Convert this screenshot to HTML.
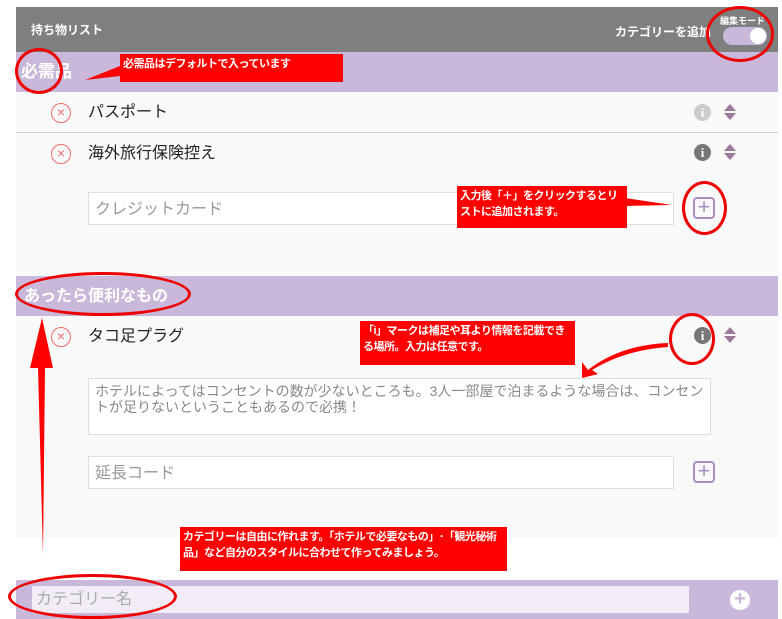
<!DOCTYPE html>
<html><head><meta charset="utf-8"><style>
*{margin:0;padding:0;box-sizing:border-box}
body{width:782px;height:619px;background:#fff;position:relative;overflow:hidden;font-family:"Liberation Sans","Noto Sans CJK JP",sans-serif}
.a{position:absolute}
.hdr{left:16px;top:7px;width:762px;height:45px;background:#7f7f7f}
.band{left:16px;width:762px;background:#c9b8d9;color:#fff;font-weight:bold}
.light{left:16px;width:762px;background:#f9f9f9}
.x{width:20px;height:20px;border:1.5px solid #f06a6a;border-radius:50%;color:#f06a6a;font-size:14px;line-height:16px;text-align:center}
.item{font-size:16px;color:#222;line-height:20px}
.info{width:17px;height:17px;border-radius:50%;color:#fff;font-size:13px;font-weight:bold;text-align:center;line-height:17px;font-family:"Liberation Serif",serif}
.inp{border:1px solid #ddd;background:#fff;color:#999;font-size:16px;padding-left:6px}
.plus{width:22px;height:22px;border:2px solid #a98fc0;border-radius:4px;color:#a98fc0;font-size:22px;line-height:16px;text-align:center}
.red{background:#f00;color:#fff;font-weight:bold;font-size:11px;line-height:16px;padding:2px 3px;letter-spacing:-0.5px}
.ov{border:3px solid #e00;border-radius:50%}
.tri{width:0;height:0;border-left:6px solid transparent;border-right:6px solid transparent}
</style></head><body>
<div class="a hdr"></div>
<div class="a" style="left:31px;top:21px;color:#fff;font-size:12px;font-weight:bold">持ち物リスト</div>
<div class="a" style="left:615px;top:23px;color:#fff;font-size:12px;font-weight:bold">カテゴリーを追加</div>
<div class="a" style="left:720px;top:14px;color:#fff;font-size:9px;font-weight:bold">編集モード</div>
<div class="a" style="left:723px;top:27px;width:44px;height:18px;border-radius:9px;background:#c9b8d9"></div>
<div class="a" style="left:750px;top:28px;width:16px;height:16px;border-radius:50%;background:#fff"></div>

<div class="a band" style="top:52px;height:40px"></div>
<div class="a" style="left:21px;top:62px;color:#fff;font-weight:bold;font-size:17px;line-height:20px">必需品</div>
<div class="a light" style="top:92px;height:183px"></div>
<div class="a" style="left:16px;top:132px;width:762px;height:1px;background:#ccc"></div>
<div class="a x" style="left:51px;top:103px">×</div>
<div class="a item" style="left:88px;top:103px">パスポート</div>
<div class="a info" style="left:694px;top:104px;background:#ccc">i</div>
<div class="a tri" style="left:724px;top:104px;border-bottom:7px solid #9b7a9b"></div>
<div class="a tri" style="left:724px;top:113px;border-top:7px solid #9b7a9b"></div>
<div class="a x" style="left:51px;top:144px">×</div>
<div class="a item" style="left:88px;top:144px">海外旅行保険控え</div>
<div class="a info" style="left:694px;top:144px;background:#777">i</div>
<div class="a tri" style="left:724px;top:144px;border-bottom:7px solid #9b7a9b"></div>
<div class="a tri" style="left:724px;top:153px;border-top:7px solid #9b7a9b"></div>
<div class="a inp" style="left:88px;top:192px;width:586px;height:33px;line-height:33px">クレジットカード</div>
<div class="a plus" style="left:693px;top:197px">+</div>

<div class="a band" style="top:276px;height:40px"></div>
<div class="a" style="left:24px;top:287px;color:#fff;font-weight:bold;font-size:16px;line-height:20px">あったら便利なもの</div>
<div class="a light" style="top:316px;height:222px"></div>
<div class="a x" style="left:51px;top:327px">×</div>
<div class="a item" style="left:88px;top:327px">タコ足プラグ</div>
<div class="a info" style="left:694px;top:327px;background:#777">i</div>
<div class="a tri" style="left:724px;top:327px;border-bottom:7px solid #9b7a9b"></div>
<div class="a tri" style="left:724px;top:336px;border-top:7px solid #9b7a9b"></div>
<div class="a inp" style="left:88px;top:378px;width:623px;height:57px;font-size:14px;line-height:16px;padding-top:4px;color:#888">ホテルによってはコンセントの数が少ないところも。3人一部屋で泊まるような場合は、コンセントが足りないということもあるので必携！</div>
<div class="a inp" style="left:88px;top:456px;width:586px;height:33px;line-height:33px">延長コード</div>
<div class="a plus" style="left:693px;top:461px">+</div>

<div class="a band" style="top:580px;height:39px"></div>
<div class="a" style="left:32px;top:586px;width:657px;height:27px;background:#f1ecf5;color:#aaa;font-size:16px;line-height:27px;padding-left:4px">カテゴリー名</div>
<div class="a" style="left:730px;top:590px;width:20px;height:20px;border-radius:50%;background:#fff;color:#c9b8d9;font-size:20px;line-height:19px;text-align:center;font-weight:bold">+</div>

<svg class="a" style="left:0;top:0" width="782" height="619">
<polygon points="85,80 120,66 120,76" fill="#f00"/>
<polygon points="625,198 672,205 625,206" fill="#f00"/>
<path d="M668,343 Q620,345 588,370 L582,362 L582,378 L598,374 L592,370 Q625,350 668,347Z" fill="#f00"/>
<polygon points="42,318 30,368 38,368 43,555 45,368 53,368" fill="#f00"/>
</svg>
<div class="a red" style="left:120px;top:54px;width:223px;height:28px">必需品はデフォルトで入っています</div>
<div class="a red" style="left:457px;top:186px;width:170px;height:42px">入力後「＋」をクリックするとリストに追加されます。</div>
<div class="a red" style="left:360px;top:321px;width:215px;height:44px">「i」マークは補足や耳より情報を記載できる場所。入力は任意です。</div>
<div class="a red" style="left:180px;top:527px;width:327px;height:44px">カテゴリーは自由に作れます。「ホテルで必要なもの」･「観光秘術品」など自分のスタイルに合わせて作ってみましょう。</div>
<div class="a ov" style="left:706px;top:6px;width:68px;height:56px"></div>
<div class="a ov" style="left:15px;top:48px;width:48px;height:46px"></div>
<div class="a ov" style="left:682px;top:181px;width:45px;height:54px"></div>
<div class="a ov" style="left:15px;top:272px;width:176px;height:44px"></div>
<div class="a ov" style="left:669px;top:313px;width:46px;height:52px"></div>
<div class="a ov" style="left:8px;top:574px;width:169px;height:45px"></div>
</body></html>
